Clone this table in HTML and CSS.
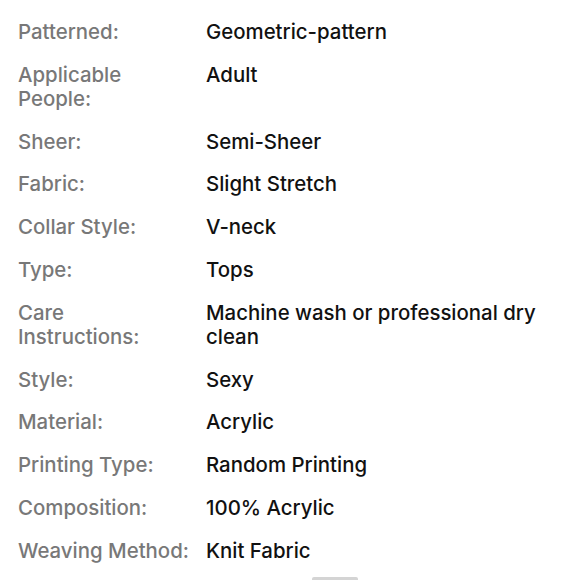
FILE: index.html
```html
<!DOCTYPE html>
<html>
<head>
<meta charset="utf-8">
<link rel="stylesheet" href="styles.css">
</head>
<body>
<div class="specs">
  <div class="label">Patterned:</div><div class="value">Geometric-pattern</div>
  <div class="label">Applicable<br>People:</div><div class="value">Adult</div>
  <div class="label">Sheer:</div><div class="value">Semi-Sheer</div>
  <div class="label">Fabric:</div><div class="value">Slight Stretch</div>
  <div class="label">Collar Style:</div><div class="value">V-neck</div>
  <div class="label">Type:</div><div class="value">Tops</div>
  <div class="label">Care<br>Instructions:</div><div class="value">Machine wash or professional dry clean</div>
  <div class="label">Style:</div><div class="value">Sexy</div>
  <div class="label">Material:</div><div class="value">Acrylic</div>
  <div class="label">Printing Type:</div><div class="value">Random Printing</div>
  <div class="label">Composition:</div><div class="value">100% Acrylic</div>
  <div class="label">Weaving Method:</div><div class="value">Knit Fabric</div>
</div>
<div class="handle"></div>
</body>
</html>
```
FILE: styles.css
```css
html, body {
  margin: 0;
  padding: 0;
  background: #ffffff;
  overflow: hidden;
}
body {
  font-family: Inter, "Noto Sans", "Liberation Sans", sans-serif;
  font-size: 20.4px;
  line-height: 24px;
}
.specs {
  display: grid;
  grid-template-columns: 188px 1fr;
  row-gap: 18.8px;
  padding: 20px 22px 0 18px;
}
.label {
  color: #787878;
  font-weight: 500;
}
.value {
  color: #111111;
  font-weight: 500;
}
.handle {
  width: 46px;
  height: 3px;
  margin: 14px 0 0 312px;
  background: #d4d4d4;
  border-radius: 2px 2px 0 0;
}
```
